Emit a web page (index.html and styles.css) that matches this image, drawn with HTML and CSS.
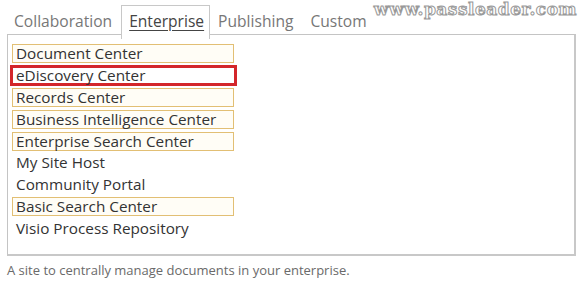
FILE: index.html
```html
<!DOCTYPE html>
<html lang="en">
<head>
    <meta charset="UTF-8">
    <meta name="viewport" content="width=device-width, initial-scale=1.0">
    <title>Select a template</title>
    <link rel="stylesheet" href="styles.css">
</head>
<body>
    <div class="watermark">www.passleader.com</div>

    <div class="tabs">
        <div class="tab">Collaboration</div>
        <div class="tab active">Enterprise</div>
        <div class="tab">Publishing</div>
        <div class="tab">Custom</div>
    </div>

    <div class="panel">
        <ul class="site-list">
            <li class="hl"><span>Document Center</span></li>
            <li class="sel"><span>eDiscovery Center</span></li>
            <li class="hl"><span>Records Center</span></li>
            <li class="hl"><span>Business Intelligence Center</span></li>
            <li class="hl"><span>Enterprise Search Center</span></li>
            <li><span>My Site Host</span></li>
            <li><span>Community Portal</span></li>
            <li class="hl"><span>Basic Search Center</span></li>
            <li><span>Visio Process Repository</span></li>
        </ul>
    </div>

    <p class="description">A site to centrally manage documents in your enterprise.</p>
</body>
</html>
```

FILE: styles.css
```css
body {
    font-family: "Open Sans", "Noto Sans", sans-serif;
    background: white;
    color: #333;
    margin: 0;
    padding: 0;
    position: relative;
}
.watermark {
    position: absolute;
    top: -1px;
    right: 7px;
    font-family: "DejaVu Serif", serif;
    font-size: 17px;
    font-weight: bold;
    letter-spacing: 0.5px;
    color: white;
    -webkit-text-stroke: 1px #999;
}
.tabs {
    display: flex;
    padding: 5px 0 0 0;
    height: 30px;
}
.tab {
    font-size: 15.6px;
    color: #777;
    padding: 4px 8px 0 7px;
    border: 1px solid transparent;
    border-bottom: none;
}
.tab:first-child {
    padding-left: 13px;
}
.tab.active {
    color: #444;
    text-decoration: underline;
    text-underline-offset: 3px;
    border-color: #c8c8c8;
    background: white;
    height: 29px;
    z-index: 1;
    padding-left: 7px;
    padding-right: 5px;
}
.panel {
    margin: 0 8px 0 7px;
    height: 219px;
    border: 1px solid #c4c4c4;
    border-right: 2px solid #c8c8c8;
    border-bottom: 2px solid #c8c8c8;
    margin-top: -1px;
}
.site-list {
    list-style: none;
    margin: 0;
    padding: 8px 0 0 4px;
}
.site-list li {
    height: 21.8px;
    display: flex;
    align-items: center;
    font-size: 15.3px;
}
.site-list li span {
    display: block;
    width: 214px;
    height: 17px;
    line-height: 17px;
    padding: 0 3px;
    border: 1px solid transparent;
    white-space: nowrap;
}
.site-list li.hl span {
    border-color: #e2bf74;
    background: #fffdf6;
}
.site-list li.sel span {
    border: 3px solid #d3262a;
    height: 15px;
    line-height: 15px;
    width: 215px;
    margin-left: -2px;
    padding-left: 3px;
}
.description {
    margin: 5px 0 0 7px;
    font-size: 13px;
    color: #6a6a6a;
}
```
